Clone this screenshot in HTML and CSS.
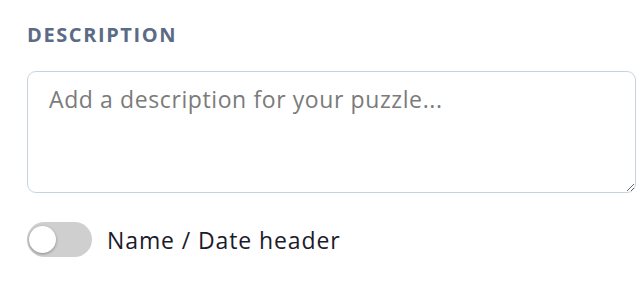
FILE: index.html
```html
<!DOCTYPE html>
<html>
<head>
<meta charset="utf-8">
<link rel="stylesheet" href="styles.css">
</head>
<body>
<div class="panel">
  <div class="field-label">DESCRIPTION</div>
  <textarea class="desc" placeholder="Add a description for your puzzle..."></textarea>
  <label class="toggle-row">
    <span class="switch"><span class="knob"></span></span>
    <span class="toggle-text">Name / Date header</span>
  </label>
</div>
</body>
</html>
```
FILE: styles.css
```css
html, body {
  margin: 0;
  padding: 0;
  background: #ffffff;
}
.panel {
  padding: 24px 4px 0 27px;
  font-family: "Open Sans", "Noto Sans", sans-serif;
  display: flex;
  flex-direction: column;
}
.field-label {
  font-size: 20px;
  font-weight: 700;
  letter-spacing: 1.6px;
  color: #5b6b86;
  line-height: 22px;
}
.desc {
  margin-top: 25px;
  box-sizing: border-box;
  width: 609px;
  height: 122px;
  border: 1.5px solid #c8d3e1;
  border-radius: 9px;
  padding: 12px 21px;
  font-family: "Open Sans", "Noto Sans", sans-serif;
  font-size: 23px;
  letter-spacing: 0.6px;
  line-height: 30px;
  color: #333;
  resize: vertical;
  outline: none;
}
.desc::placeholder {
  color: #7b7b7b;
}
.toggle-row {
  margin-top: 29px;
  display: flex;
  align-items: center;
  gap: 15px;
}
.switch {
  width: 65px;
  height: 35px;
  border-radius: 18px;
  background: #cfcfcf;
  display: flex;
  align-items: center;
  padding-left: 2px;
  box-sizing: border-box;
}
.knob {
  width: 27px;
  height: 27px;
  border-radius: 50%;
  background: #ffffff;
  box-shadow: 0 1px 3px rgba(0,0,0,0.35);
}
.toggle-text {
  font-size: 23px;
  letter-spacing: 0.9px;
  color: #1b1b2a;
}
```
